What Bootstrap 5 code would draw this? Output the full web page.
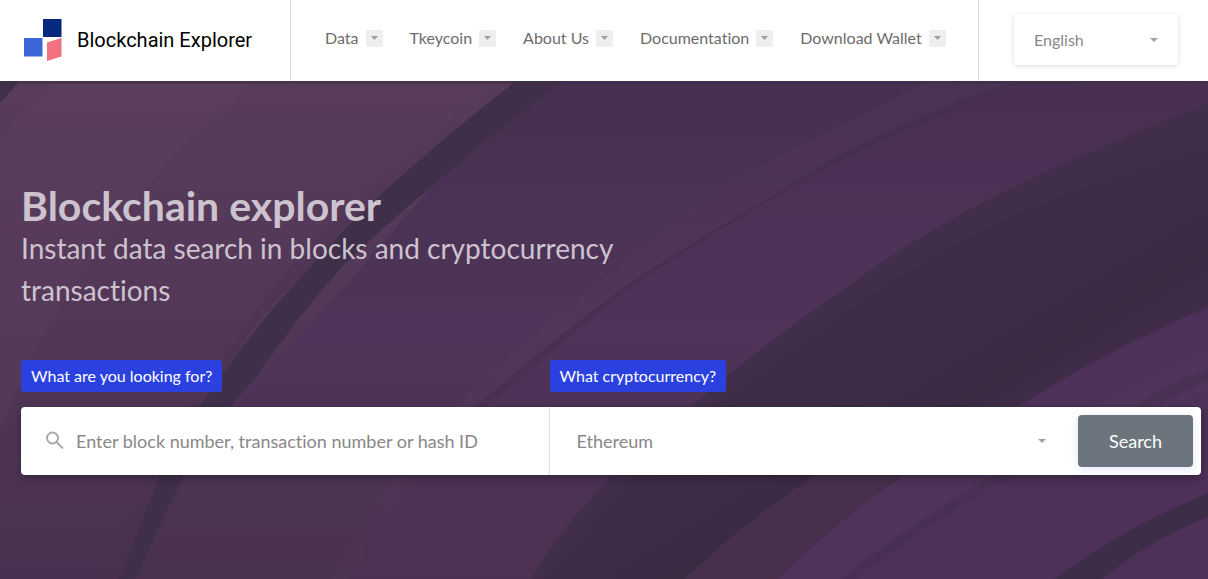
<!DOCTYPE html>
<html lang="en">
<head>
<meta charset="utf-8">
<meta name="viewport" content="width=device-width, initial-scale=1">
<title>Blockchain Explorer</title>
<link href="https://cdn.jsdelivr.net/npm/bootstrap@5.3.0/dist/css/bootstrap.min.css" rel="stylesheet">
<style>
  body { font-family: Lato, "Liberation Sans", sans-serif; font-size: 16px; color: #666; }
  body, input, select, button { font-variant-ligatures: none; }
  .site-header { min-height: 81px; }
  .brand { width: 291px; padding-left: 24px; gap: 15px; border-right: 1px solid #ddd; color: #000; font: 20px/24px Roboto, sans-serif; }
  .brand-name { padding-bottom: 2px; }
  .main-menu { padding-left: 34px; gap: 27px; height: 76px; }
  .menu-link { color: #6c6c6c; gap: 7px; font-size: 16px; }
  .arrow-box { width: 17px; height: 17px; border-radius: 2px; background: #eee; }
  .lang-side { width: 230px; padding: 14px 30px 16px 35px; border-left: 1px solid #ddd; }
  .plain-select { border: 0; color: #888; background-color: #fff; background-size: 8px 4px;
    background-image: url("data:image/svg+xml,%3Csvg xmlns='http://www.w3.org/2000/svg' viewBox='0 0 8 4'%3E%3Cpath d='M0 0h8L4 4z' fill='%23a0a0a0'/%3E%3C/svg%3E"); }
  .lang-select { height: 51px; padding: 0 20px; font-size: 16px; background-position: right 20px center; box-shadow: 0 1px 4px rgba(0,0,0,.16); border-radius: 4px; }
  .hero { min-height: calc(100vh - 81px); padding: 103px 7px 104px 21px; background: #4d3457; }
  .hero-art { z-index: 0; }
  .hero-body { z-index: 1; }
  .hero-text { max-width: 620px; color: #cdc3cf; }
  .hero-title { font-size: 41px; line-height: 43px; font-weight: 700; }
  .hero-sub { font-size: 28px; line-height: 42px; }
  .field-tag { padding: 4px 10px; line-height: 24px; border-radius: 3px; background: #2a41e0; color: #fff; }
  .search-form { margin-top: 49px; display: grid; grid-template-columns: 1fr 1fr 123px; row-gap: 15px; }
  .search-bar { grid-column: 1 / -1; display: grid; grid-template-columns: subgrid; height: 68px; border-radius: 4px; box-shadow: 0 3px 10px rgba(0,0,0,.3); }
  .query-cell { padding-left: 25px; gap: 12px; border-right: 1px solid #e0e0e0; }
  .query-input { border: 0; padding: 0; font-size: 18px; color: #888; box-shadow: none; }
  .query-input::placeholder { color: #888; opacity: 1; }
  .coin-select { padding: 0 27px; font-size: 18px; background-position: right 32px center; }
  .search-btn { margin: 8px 8px 8px 0; border-radius: 4px; background: #6c757d; color: #fff; font-size: 18px; box-shadow: 0 2px 8px rgba(102,118,239,.2); }
</style>
</head>
<body>
<header class="site-header d-flex bg-white">
  <a class="brand d-flex align-items-center text-decoration-none flex-shrink-0" href="#">
    <svg width="38" height="43" viewBox="0 0 38 43" aria-hidden="true"><path d="M19 0h18.500v18H19z" fill="#06297f"/><path d="M0 19h18.500v18.500H0z" fill="#3a66d8"/><path d="M23 23.500 37.500 19v18.500L23 42z" fill="#f27181"/></svg>
    <span class="brand-name">Blockchain Explorer</span>
  </a>
  <nav class="main-menu d-flex align-items-center flex-grow-1 text-nowrap">
    <a class="menu-link d-flex align-items-center text-decoration-none" href="#">Data <span class="arrow-box d-flex align-items-center justify-content-center"><svg width="7" height="4"><path d="M0 0h7L3.500 4z" fill="#a0a0a0"/></svg></span></a>
    <a class="menu-link d-flex align-items-center text-decoration-none" href="#">Tkeycoin <span class="arrow-box d-flex align-items-center justify-content-center"><svg width="7" height="4"><path d="M0 0h7L3.500 4z" fill="#a0a0a0"/></svg></span></a>
    <a class="menu-link d-flex align-items-center text-decoration-none" href="#">About Us <span class="arrow-box d-flex align-items-center justify-content-center"><svg width="7" height="4"><path d="M0 0h7L3.500 4z" fill="#a0a0a0"/></svg></span></a>
    <a class="menu-link d-flex align-items-center text-decoration-none" href="#">Documentation <span class="arrow-box d-flex align-items-center justify-content-center"><svg width="7" height="4"><path d="M0 0h7L3.500 4z" fill="#a0a0a0"/></svg></span></a>
    <a class="menu-link d-flex align-items-center text-decoration-none" href="#">Download Wallet <span class="arrow-box d-flex align-items-center justify-content-center"><svg width="7" height="4"><path d="M0 0h7L3.500 4z" fill="#a0a0a0"/></svg></span></a>
  </nav>
  <div class="lang-side flex-shrink-0">
    <select class="form-select plain-select lang-select" aria-label="Language"><option>English</option></select>
  </div>
</header>
<main class="hero position-relative overflow-hidden">
  <svg class="hero-art position-absolute top-0 start-0 w-100 h-100" viewBox="0 81 1208 498" preserveAspectRatio="xMidYMid slice" aria-hidden="true">
    <defs>
      <linearGradient id="left" x1="0" y1="0" x2="0" y2="1"><stop offset="0" stop-color="#593c5b"/><stop offset=".5" stop-color="#523757"/><stop offset="1" stop-color="#483150"/></linearGradient>
      <linearGradient id="mid" x1="0" y1="0" x2="0" y2="1"><stop offset="0" stop-color="#45304f"/><stop offset=".5" stop-color="#4f3559"/><stop offset="1" stop-color="#49324f"/></linearGradient>
      <linearGradient id="halo" gradientUnits="userSpaceOnUse" x1="0" y1="81" x2="0" y2="579"><stop offset="0" stop-color="#45304a" stop-opacity=".1"/><stop offset=".5" stop-color="#45304a" stop-opacity=".35"/><stop offset="1" stop-color="#45304a" stop-opacity=".1"/></linearGradient>
      <linearGradient id="core" gradientUnits="userSpaceOnUse" x1="900" y1="230" x2="1010" y2="410"><stop offset="0" stop-color="#3c2c46"/><stop offset=".5" stop-color="#3e2d48"/><stop offset=".85" stop-color="#3a2a42"/><stop offset="1" stop-color="#3f2d48"/></linearGradient>
    </defs>
    <path d="M0 81H1208V579H0z" fill="#4b3057"/>
    <path d="M0 81H540L285 350 135 579H0z" fill="url(#left)"/>
    <path d="M540 81H1208V103Q1090 150 1001 193 910 240 847 287 755 350 693 405 635 445 608 480 560 530 531 579H125Q190 440 254 380T431 187z" fill="url(#mid)"/>
    <path d="M1009 84Q870 130 770 197 670 255 616 293 540 350 478 405 400 480 350 579H531L608 480Q635 445 693 405 755 350 847 287 910 240 1001 193 1090 150 1208 103V81z" fill="#50325a" opacity=".35"/>
    <path d="M54 81H255Q150 170 90 260T0 430V145Q20 112 54 81z" fill="#624562" opacity=".2"/>
    <path d="M0 81h20L0 103z" fill="#413049"/>
    <path d="M500 81Q370 180 295 260 215 360 145 480L95 579H119L158 480Q185 415 231 363 260 310 308 270 370 195 516 81z" fill="url(#halo)"/>
    <path d="M516 81H562Q490 135 431 187 385 225 339 270 295 320 254 380 210 425 181 480L135 579H119L158 480Q190 415 231 363 265 315 308 270 370 195 516 81z" fill="#3f2f48"/>
    <path d="M1009 84Q870 130 770 197 670 255 616 293 540 350 478 405L430 455 486 408Q560 345 620 295 685 250 774 198 870 140 1018 84z" fill="#432f4d" opacity=".6"/>
    <path d="M930 81Q780 150 690 210 560 310 455 405 380 485 330 579H350Q400 480 478 405 540 350 616 293 670 255 770 197 870 130 1009 84z" fill="#573a5c" opacity=".28"/>
    <path d="M1208 103Q1090 150 1001 193 910 240 847 287 755 350 693 405 635 445 608 480 560 530 531 579H778Q835 520 901 477 950 435 1017 407 1105 350 1208 307z" fill="#412e4a"/>
    <path d="M1208 147Q1090 180 989 227 910 268 854 307 770 365 700 418 640 465 545 579H778Q835 520 901 477 950 435 1017 407 1105 350 1208 307z" fill="url(#core)"/>
    <path d="M1017 407Q880 430 812 477 740 525 685 579H778Q835 520 901 477z" fill="#46304c"/>
    <path d="M1208 310Q1105 353 1017 407 950 437 901 477 835 522 778 579H1208z" fill="#4d3158"/>
    <path d="M1017 440Q950 437 901 477 835 522 778 579H840Q920 520 1000 477L1208 390V350z" fill="#573960" opacity=".3"/>
    <path d="M1208 370Q1150 390 1120 420 1010 465 960 495 880 545 840 579H855Q920 530 990 488L1208 380z" fill="#3d2d48" opacity=".3"/>
    <path d="M1208 493Q1120 530 1055 579H1102Q1150 540 1208 517z" fill="#3e2d48"/>
    <path d="M0 81H1208V84H0z" fill="#3d2f48" opacity=".6"/>
  </svg>
  <div class="hero-body position-relative">
    <div class="hero-text">
      <h1 class="hero-title mb-0">Blockchain explorer</h1>
      <p class="hero-sub mb-0">Instant data search in blocks and cryptocurrency transactions</p>
    </div>
    <form class="search-form">
      <div><label class="field-tag d-inline-block" for="query">What are you looking for?</label></div>
      <div><label class="field-tag d-inline-block" for="coin">What cryptocurrency?</label></div>
      <div class="search-bar bg-white">
        <div class="query-cell d-flex align-items-center">
          <svg class="flex-shrink-0" width="18" height="20" viewBox="0 0 18 20" fill="none" stroke="#aaa" stroke-width="2" aria-hidden="true"><circle cx="6.500" cy="7" r="5.500"/><path d="m10.500 11 6.500 6.500"/></svg>
          <input class="form-control query-input" id="query" type="text" placeholder="Enter block number, transaction number or hash ID">
        </div>
        <select class="form-select plain-select coin-select" id="coin"><option>Ethereum</option></select>
        <button class="btn search-btn" type="submit">Search</button>
      </div>
    </form>
  </div>
</main>
<script src="https://cdn.jsdelivr.net/npm/bootstrap@5.3.0/dist/js/bootstrap.bundle.min.js"></script>
</body>
</html>
